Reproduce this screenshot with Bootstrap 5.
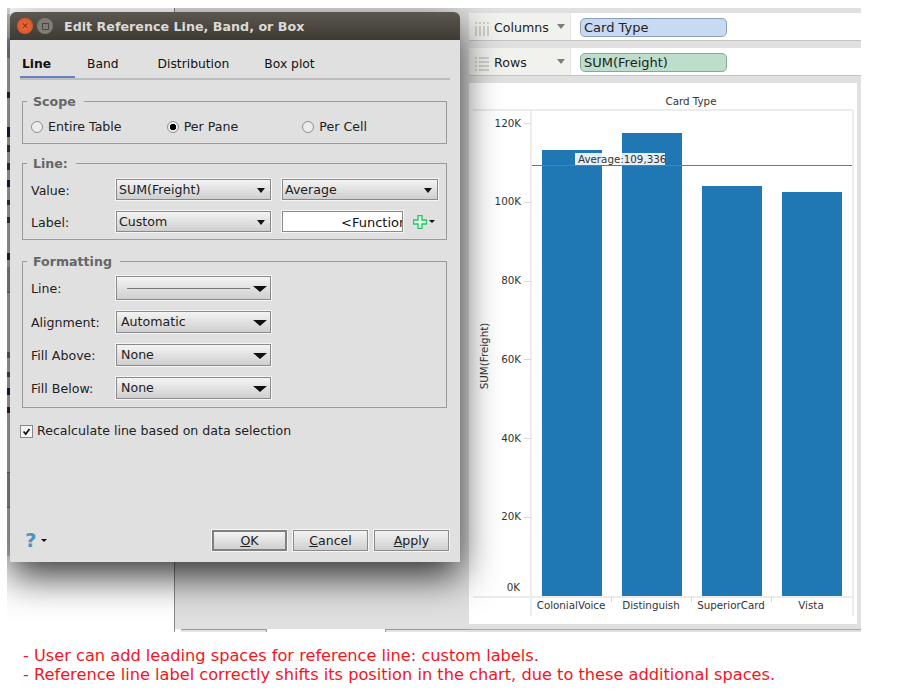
<!DOCTYPE html>
<html lang="en">
<head>
<meta charset="utf-8">
<title>Edit Reference Line</title>
<link rel="stylesheet" href="https://cdn.jsdelivr.net/npm/bootstrap@5.3.0/dist/css/bootstrap.min.css">
<style>
html,body{margin:0;background:#fff}
body{font-family:"DejaVu Sans",sans-serif;font-size:12.6px;color:#222;width:897px;height:699px;overflow:hidden}
.stage{position:relative;margin:8px 0 0 7px;width:854px;height:624px;overflow:hidden;background:#fff;display:flex}
.left-pane{width:168px;flex:none;border-right:1px solid #8a8a8a;background-color:#fff;background-repeat:no-repeat;background-size:3px 100%;background-image:linear-gradient(to bottom,#d8d8d8 0 6px,#b8b8b8 6px 30px,#8f98a8 30px 50px,#d0d0d0 50px 84px,#333 84px 90px,#d0d0d0 90px 119px,#1c2550 119px 129px,#d0d0d0 129px 137px,#444 137px 144px,#d0d0d0 144px 155px,#444 155px 162px,#d0d0d0 162px 172px,#1c2550 172px 179px,#d0d0d0 179px 192px,#444 192px 197px,#d0d0d0 197px 209px,#444 209px 215px,#d0d0d0 215px 245px,#333 245px 252px,#d0d0d0 252px 259px,#a8a8a8 259px 284px,#777 284px 285px,#d0d0d0 285px 344px,#777 344px 350px,#d0d0d0 350px 364px,#555 364px 369px,#d0d0d0 369px 380px,#1c2550 380px 387px,#d0d0d0 387px 399px,#501c30 399px 405px,#d0d0d0 405px 464px,#777 464px 465px,#a8a8a8 465px 499px,#777 499px 500px,#d0d0d0 500px 548px,transparent 548px)}
.mid-pane{width:294px;flex:none;display:flex;flex-direction:column}
.mid-fill{flex:1;background:#e0e0e0}
.mid-tabs{height:3px;flex:none;display:flex;padding-left:6px}
.bg-tab{flex:none;height:3px;background:#e4e4e4;border-top:1px solid #999}
.bg-tab-a{width:86px;border-right:1px solid #999}
.bg-tab-b{margin-left:118px;flex:1;border-left:1px solid #999}
.right-pane{flex:1;padding-top:5px;display:flex;flex-direction:column;gap:7px;min-width:0;background:#e0e0e0}
.shelf{height:28px;background:#fff;display:flex;border-bottom:1px solid #c4c4c4;flex:none}
.shelf-head{width:102px;background:#f1f1ed;display:flex;align-items:center;padding:3px 0 0 6px;flex:none;border-right:1px solid #e6e6e6;border-radius:3px 0 0 0}
.shelf-head svg{flex:none;margin-right:5px}
.shelf-name{width:63px}
.shelf-caret{width:0;height:0;margin-bottom:4px;border-left:4px solid transparent;border-right:4px solid transparent;border-top:5px solid #7d7d7d}
.shelf-body{padding:5px 0 0 9px}
.pill{width:147px;height:19px;border-radius:5px;line-height:17px;padding-left:3px;font-size:13px}
.pill-blue{background:#c8d9f2;border:1px solid #8c9fb8}
.pill-green{background:#bcdecb;border:1px solid #8aa898}
.chart-box{width:388px;height:541px;background:#fff;flex:none}
.chart-box svg{display:block}
.chart-box text{font-family:"DejaVu Sans",sans-serif;font-size:10.3px;fill:#333}
.chart-rule{height:3px;margin-top:-2px;flex:none;border-top:1px solid #a8a8a8}
.dialog{position:absolute;left:3px;top:4px;width:450px;height:550px;background:#e0e0e0;border-radius:6px 6px 0 0;box-shadow:0 14px 38px rgba(0,0,0,.8)}
.titlebar{height:28px;border-radius:6px 6px 0 0;background:linear-gradient(#5c5850,#3d3a34);display:flex;align-items:center;padding-left:7px}
.win-btn{width:16px;height:16px;border-radius:50%;display:flex;align-items:center;justify-content:center;flex:none}
.win-close{background:radial-gradient(#f0703c,#d4491f);margin-right:4px;color:#8a2a10;font-size:9px;line-height:1}
.win-max{background:#7f7c75;margin-right:11px}
.win-max i{display:block;width:7px;height:7px;border:1px solid #4a4843}
.title-text{font-weight:700;font-size:12.7px;color:#dcdad5;padding-top:1px}
.tabs-row{margin:12px 10px 0 10px;height:28px;border-bottom:2px solid #bdbdbd;flex-wrap:nowrap}
.tabs-row .nav-link{color:#111;padding:0;font-size:12.3px;height:26px;line-height:24px;border:0;border-radius:0;background:none}
.tabs-row .nav-link.active{font-weight:700;color:#111;border-bottom:2px solid #6583c0;background:none;width:55px;padding-left:2px}
.t-band{margin-left:12px}
.t-dist{margin-left:39px}
.t-box{margin-left:35px}
.grp{margin:0 13px 0 12px;border:1px solid #9a9a9a;padding:0 8px;position:relative}
.grp legend{float:none;width:auto;font-size:12.6px;font-weight:700;color:#666;margin:0 0 0 -4px;padding:1px 8px 0 6px;line-height:15px}
.grp-scope{height:51px;margin-top:13px}
.grp-line{height:85px;margin-top:11px}
.grp-fmt{height:155px;margin-top:13px}
.radio-row{display:flex;padding-top:8px}
.radio-item{display:flex;align-items:center;gap:5px;margin:0;padding:1px 0 0;min-height:0;width:136px}
.radio-item .form-check-input{float:none;margin:0 0 1px;width:12px;height:12px;background-color:#ececec;border:1px solid #8f8f8f;flex:none}
.radio-item .form-check-input:checked{background-color:#ececec;border-color:#8f8f8f;background-image:radial-gradient(circle,#000 0,#000 3px,transparent 3.5px)}
.line-stack{display:flex;flex-direction:column;gap:11px;padding-top:8px}
.field-row{display:flex;align-items:center;height:21px}
.field-label{width:85px;flex:none;padding-top:3px}
.combo{width:155px;flex:none;height:21px;border:1px solid #8a8a8a;border-radius:0;outline:1px solid #f6f6f6;outline-offset:0;padding:1px 5px 0 2px;background:linear-gradient(#f4f4f4,#cfcfcf);font-size:12.6px;color:#222;display:flex;align-items:center;justify-content:space-between;text-align:left;line-height:1}
.combo:hover,.combo:active{background:linear-gradient(#f4f4f4,#cfcfcf);color:#222;border-color:#8a8a8a}
.combo-caret{width:0;height:0;flex:none;border-left:4px solid transparent;border-right:4px solid transparent;border-top:5px solid #111}
.combo-wide{padding-left:4px;padding-right:3px}
.combo-wide .combo-caret{border-left-width:7px;border-right-width:7px;border-top-width:6px}
.combo-b{width:156px;margin-left:11px}
.lbl-input{width:121px;height:21px;margin-left:11px;flex:none;border:1px solid #8a8a8a;padding:1px 0 0 58px;outline:1px solid #f6f6f6;font-size:13px;color:#111;background:#fff;overflow:hidden;white-space:nowrap}
.add-wrap{margin-left:10px;display:flex;align-items:center;gap:2px}
.mini-caret{width:0;height:0;border-left:3px solid transparent;border-right:3px solid transparent;border-top:3px solid #111;flex:none}
.fmt-stack{display:flex;flex-direction:column;gap:11px;padding-top:7px}
.fmt-stack .field-row{height:22px}
.fmt-stack .combo{height:22px}
.fmt-stack .field-row:first-child,.fmt-stack .field-row:first-child .combo{height:24px}
.line-sample{display:block;height:1px;width:123px;background:#777;margin-left:6px}
.check-row{display:flex;align-items:center;gap:4px;margin:14px 0 0 10px;padding:0;min-height:0}
.check-row .form-check-input{float:none;margin:0;width:13px;height:13px;border:1px solid #888;border-radius:0;background-color:#f4f4f4;flex:none;background-size:100%}
.check-row .form-check-input:checked{background-color:#f4f4f4;border-color:#888;background-image:url("data:image/svg+xml,%3csvg xmlns='http://www.w3.org/2000/svg' viewBox='0 0 13 13'%3e%3cpath d='M3 6.5l2.6 3L10 3.5' fill='none' stroke='%23111' stroke-width='2'/%3e%3c/svg%3e")}
.dlg-foot{position:absolute;left:15px;right:11px;top:518px;display:flex;align-items:center}
.help{font-size:20px;font-weight:700;color:#4e93bd;line-height:21px;width:16px}
.foot-btns{margin-left:auto;display:flex;gap:6px}
.dlg-btn{width:75px;height:21px;padding:1px 0 0;border:1px solid #8a8a8a;border-radius:0;outline:1px solid #f6f6f6;background:linear-gradient(#f4f4f4,#cfcfcf);color:#222;font-size:12.6px;line-height:18px}
.dlg-btn:hover,.dlg-btn:active{background:linear-gradient(#f4f4f4,#cfcfcf);color:#222;border-color:#8a8a8a}
.dlg-default{border:2px solid #808080;line-height:16px}
.notes{margin:14px 0 0 23px;color:#f5141e;font-size:16.2px;line-height:19px;white-space:nowrap}
</style>
</head>
<body>
<div class="stage">
  <div class="left-pane"></div>
  <div class="mid-pane"><div class="mid-fill"></div><div class="mid-tabs"><div class="bg-tab bg-tab-a"></div><div class="bg-tab bg-tab-b"></div></div></div>
  <div class="right-pane">
    <div class="shelf">
      <div class="shelf-head">
        <svg width="14" height="15" viewBox="0 0 14 15"><g fill="#cfcfc9"><rect x="0" y="5" width="2" height="10"/><rect x="4" y="5" width="2" height="10"/><rect x="8" y="5" width="2" height="10"/><rect x="12" y="5" width="2" height="10"/><rect x="0" y="1" width="2" height="2"/><rect x="4" y="1" width="2" height="2"/><rect x="8" y="1" width="2" height="2"/><rect x="12" y="1" width="2" height="2"/></g></svg>
        <span class="shelf-name">Columns</span><span class="shelf-caret"></span>
      </div>
      <div class="shelf-body"><div class="pill pill-blue">Card Type</div></div>
    </div>
    <div class="shelf">
      <div class="shelf-head">
        <svg width="14" height="15" viewBox="0 0 14 15"><g fill="#cfcfc9"><rect x="0" y="1" width="2" height="2"/><rect x="0" y="5" width="2" height="2"/><rect x="0" y="9" width="2" height="2"/><rect x="0" y="13" width="2" height="2"/><rect x="4" y="1" width="10" height="2"/><rect x="4" y="5" width="10" height="2"/><rect x="4" y="9" width="10" height="2"/><rect x="4" y="13" width="10" height="2"/></g></svg>
        <span class="shelf-name">Rows</span><span class="shelf-caret"></span>
      </div>
      <div class="shelf-body"><div class="pill pill-green">SUM(Freight)</div></div>
    </div>
    <div class="chart-box">
      <svg width="388" height="541" viewBox="469 83 388 541">
        <g stroke="#ececec" stroke-width="2" fill="none">
          <path d="M473 110H853"/><path d="M473 597H853"/><path d="M531 110V616"/><path d="M853 110V616"/>
        </g>
        <g stroke="#d8d8d8" stroke-width="1">
          <path d="M524 123.5H531M524 202.5H531M524 281.5H531M524 359.5H531M524 438.5H531M524 517.5H531"/>
          <path d="M611.5 597V602M691.5 597V602M771.5 597V602"/>
        </g>
        <g fill="#1f77b4">
          <rect x="542" y="150" width="60" height="446"/>
          <rect x="622" y="133" width="60" height="463"/>
          <rect x="702" y="186" width="60" height="410"/>
          <rect x="782" y="192" width="60" height="404"/>
        </g>
        <rect x="575" y="153" width="90" height="12" fill="#fff" fill-opacity=".88"/>
        <path d="M532 165.5H852" stroke="#777" stroke-width="1"/>
        <text x="691" y="105" text-anchor="middle">Card Type</text>
        <text x="578" y="162.500">Average:109,336</text>
        <g text-anchor="end">
          <text x="521" y="127">120K</text><text x="521" y="205">100K</text><text x="521" y="284">80K</text><text x="521" y="363">60K</text><text x="521" y="442">40K</text><text x="521" y="520">20K</text><text x="520" y="591">0K</text>
        </g>
        <text transform="translate(488 356) rotate(-90)" text-anchor="middle">SUM(Freight)</text>
        <g text-anchor="middle">
          <text x="571" y="609">ColonialVoice</text><text x="651" y="609">Distinguish</text><text x="731" y="609">SuperiorCard</text><text x="811" y="609">Vista</text>
        </g>
      </svg>
    </div>
    <div class="chart-rule"></div>
  </div>

  <div class="dialog">
    <div class="titlebar">
      <span class="win-btn win-close">&#10005;</span>
      <span class="win-btn win-max"><i></i></span>
      <span class="title-text">Edit Reference Line, Band, or Box</span>
    </div>
    <ul class="nav tabs-row">
      <li class="nav-item"><a class="nav-link active" href="#">Line</a></li>
      <li class="nav-item t-band"><a class="nav-link" href="#">Band</a></li>
      <li class="nav-item t-dist"><a class="nav-link" href="#">Distribution</a></li>
      <li class="nav-item t-box"><a class="nav-link" href="#">Box plot</a></li>
    </ul>
    <fieldset class="grp grp-scope">
      <legend>Scope</legend>
      <div class="radio-row">
        <label class="form-check radio-item"><input class="form-check-input" type="radio" name="sc">Entire Table</label>
        <label class="form-check radio-item"><input class="form-check-input" type="radio" name="sc" checked>Per Pane</label>
        <label class="form-check radio-item"><input class="form-check-input" type="radio" name="sc">Per Cell</label>
      </div>
    </fieldset>
    <fieldset class="grp grp-line">
      <legend>Line:</legend>
      <div class="line-stack">
        <div class="field-row"><span class="field-label">Value:</span>
          <button type="button" class="btn combo">SUM(Freight)<span class="combo-caret"></span></button>
          <button type="button" class="btn combo combo-b">Average<span class="combo-caret"></span></button>
        </div>
        <div class="field-row"><span class="field-label">Label:</span>
          <button type="button" class="btn combo">Custom<span class="combo-caret"></span></button>
          <div class="lbl-input">&lt;Function</div>
          <span class="add-wrap"><svg width="14" height="14" viewBox="0 0 14 14"><path d="M5 .5H9V5H13.500V9H9V13.500H5V9H.5V5H5Z" fill="#dff5e3" stroke="#1fc766" stroke-width="1.3"/></svg><span class="mini-caret"></span></span>
        </div>
      </div>
    </fieldset>
    <fieldset class="grp grp-fmt">
      <legend>Formatting</legend>
      <div class="fmt-stack">
        <div class="field-row"><span class="field-label">Line:</span><button type="button" class="btn combo combo-wide" aria-label="Line style"><span class="line-sample"></span><span class="combo-caret"></span></button></div>
        <div class="field-row"><span class="field-label">Alignment:</span><button type="button" class="btn combo combo-wide">Automatic<span class="combo-caret"></span></button></div>
        <div class="field-row"><span class="field-label">Fill Above:</span><button type="button" class="btn combo combo-wide">None<span class="combo-caret"></span></button></div>
        <div class="field-row"><span class="field-label">Fill Below:</span><button type="button" class="btn combo combo-wide">None<span class="combo-caret"></span></button></div>
      </div>
    </fieldset>
    <label class="form-check check-row"><input class="form-check-input" type="checkbox" checked>Recalculate line based on data selection</label>
    <div class="dlg-foot">
      <span class="help">?</span><span class="mini-caret"></span>
      <div class="foot-btns">
        <button type="button" class="btn dlg-btn dlg-default"><u>O</u>K</button>
        <button type="button" class="btn dlg-btn"><u>C</u>ancel</button>
        <button type="button" class="btn dlg-btn"><u>A</u>pply</button>
      </div>
    </div>
  </div>
</div>
<div class="notes">
  <div>- User can add leading spaces for reference line: custom labels.</div>
  <div>- Reference line label correctly shifts its position in the chart, due to these additional spaces.</div>
</div>
</body>
</html>
